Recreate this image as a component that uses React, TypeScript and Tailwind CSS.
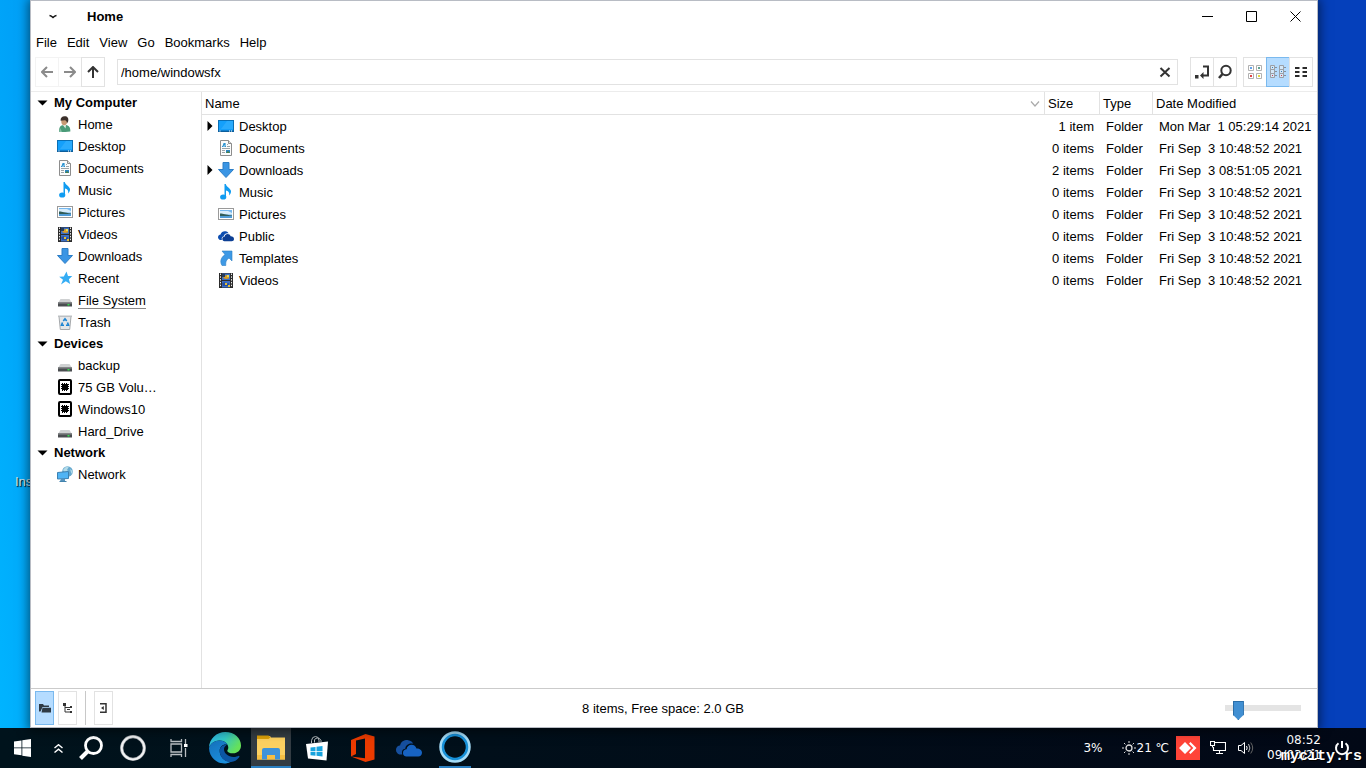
import React, { useState } from 'react';

type IconName =
  | 'home' | 'desktop' | 'documents' | 'music' | 'pictures' | 'videos' | 'downloads'
  | 'recent' | 'drive' | 'trash' | 'volume' | 'network' | 'public' | 'templates';

interface Place {
  label: string;
  icon: IconName;
  current?: boolean;
}

interface Entry {
  name: string;
  icon: IconName;
  size: string;
  modified: string;
  expandable?: boolean;
}

const places: { title: string; items: Place[] }[] = [
  {
    title: 'My Computer',
    items: [
      { label: 'Home', icon: 'home' },
      { label: 'Desktop', icon: 'desktop' },
      { label: 'Documents', icon: 'documents' },
      { label: 'Music', icon: 'music' },
      { label: 'Pictures', icon: 'pictures' },
      { label: 'Videos', icon: 'videos' },
      { label: 'Downloads', icon: 'downloads' },
      { label: 'Recent', icon: 'recent' },
      { label: 'File System', icon: 'drive', current: true },
      { label: 'Trash', icon: 'trash' },
    ],
  },
  {
    title: 'Devices',
    items: [
      { label: 'backup', icon: 'drive' },
      { label: '75 GB Volu…', icon: 'volume' },
      { label: 'Windows10', icon: 'volume' },
      { label: 'Hard_Drive', icon: 'drive' },
    ],
  },
  { title: 'Network', items: [{ label: 'Network', icon: 'network' }] },
];

const entries: Entry[] = [
  { name: 'Desktop', icon: 'desktop', size: '1 item', modified: 'Mon Mar  1 05:29:14 2021', expandable: true },
  { name: 'Documents', icon: 'documents', size: '0 items', modified: 'Fri Sep  3 10:48:52 2021' },
  { name: 'Downloads', icon: 'downloads', size: '2 items', modified: 'Fri Sep  3 08:51:05 2021', expandable: true },
  { name: 'Music', icon: 'music', size: '0 items', modified: 'Fri Sep  3 10:48:52 2021' },
  { name: 'Pictures', icon: 'pictures', size: '0 items', modified: 'Fri Sep  3 10:48:52 2021' },
  { name: 'Public', icon: 'public', size: '0 items', modified: 'Fri Sep  3 10:48:52 2021' },
  { name: 'Templates', icon: 'templates', size: '0 items', modified: 'Fri Sep  3 10:48:52 2021' },
  { name: 'Videos', icon: 'videos', size: '0 items', modified: 'Fri Sep  3 10:48:52 2021' },
];

const menus = ['File', 'Edit', 'View', 'Go', 'Bookmarks', 'Help'];

// 16px file and place icons
const glyphs: Record<IconName, React.ReactNode> = {
  home: (
    <>
      <path d="M2.300 16c-.6-5 1.200-6.500 4.200-7h2.500c3 .6 4.500 2.500 4.300 6.500l-5 .5z" fill="#4a9b78" />
      <path d="M3 16l.4-4 1.400 4z" fill="#8fc6ad" />
      <path d="M5.500 8.500l3 4 .5-4z" fill="#e8efe9" />
      <ellipse cx="7.200" cy="5.600" rx="2.900" ry="3.700" fill="#c79a74" />
      <path d="M3.600 4.800C3.300 1.800 5 .3 7.600.3c3 0 4.300 2 3.600 5L10 7.500c0-2-.8-3-2.300-3.300z" fill="#3b302b" />
    </>
  ),
  desktop: (
    <>
      <rect x=".5" y="2.500" width="15" height="11" fill="#14a0fb" stroke="#0a6fb5" />
      <path d="M9 3h6v8H3z" fill="#3db4ff" opacity=".55" />
      <path d="M0 12.500h16V14H0z" fill="#0c5e9c" />
      <path d="M1.500 12.500h1v1h-1zM11 12.500h1v1h-1zM13 12.500h1v1h-1z" fill="#fff" />
    </>
  ),
  documents: (
    <>
      <path d="M2.500.5h8l3 3v12h-11z" fill="#fbfbfb" stroke="#8d8d8d" />
      <path d="M10.500.5v3h3" fill="#ddd" stroke="#8d8d8d" />
      <path d="M4 6.500h1l1-3h1v3h1" stroke="#2c93d1" strokeWidth="1.200" fill="none" />
      <path d="M9 4.500h1M9 6.500h3M4 8.500h8M4 10.500h3M4 12.500h3" stroke="#9aa3a8" fill="none" />
      <rect x="8" y="10" width="4" height="3" fill="#2c85c1" />
      <path d="M8 13l2-2 2 2z" fill="#4c8146" />
    </>
  ),
  music: (
    <>
      <path d="M6.500 0h1.300c.5 2.800 4.700 4.300 5.200 7 .2 1.700-.8 3.500-1.800 4.500.5-3-.9-4.500-3.200-5V13H6.500z" fill="#109cf1" />
      <ellipse cx="5.200" cy="13" rx="3.100" ry="2.600" fill="#109cf1" />
    </>
  ),
  pictures: (
    <>
      <rect x=".5" y="2.500" width="15" height="11" fill="#fff" stroke="#9a9a9a" />
      <rect x="2" y="4" width="12" height="8" fill="#75b7ee" />
      <path d="M2 5h8l4 2v1.500H2z" fill="#d7ecfa" />
      <path d="M2 7.500c4 0 5 1.200 12 2V10.500H2z" fill="#315c56" />
      <path d="M2 10h12v2H2z" fill="#4f9bd6" />
    </>
  ),
  videos: (
    <>
      <rect x="1" y="1" width="14" height="15" fill="#2b2b2b" />
      <path d="M2.500 1.500v14M13.500 1.500v14" stroke="#ececec" strokeDasharray="1.500 1.300" />
      <rect x="4" y="1.500" width="8" height="6.500" fill="#3c6fc4" />
      <rect x="4" y="9" width="8" height="6.500" fill="#3c6fc4" />
      <path d="M5 6l3-3 3 1v2.500L8 7z" fill="#dc9d24" />
      <path d="M4 2h3v3H4z" fill="#273d5d" />
      <path d="M9 3h2v2H9z" fill="#e9dc52" />
      <path d="M4 11l3-1 1 2 3-1v3H5z" fill="#284d9d" />
      <path d="M7 11h2v2H7zM10 13h2v2h-2z" fill="#e3bf36" />
    </>
  ),
  downloads: (
    <path d="M5 .5h6v7h4.500L8 15.500.5 7.500H5z" fill="#3a95e4" stroke="#2d7ec6" />
  ),
  recent: (
    <path d="M9.500 1.500l1.500 4.600 4.300-.1-3.400 3.300 1.300 4.700-4.400-2.700L4 14.500l2-4.700L2.200 6.800l4.600-.4z" fill="#35adf4" />
  ),
  drive: (
    <>
      <path d="M3.500 7h9l2.500 4H1z" fill="#cfd1d2" />
      <path d="M1 10.500h14v4H1z" fill="#4a4d50" />
      <path d="M1 10.500h14v1.200H1z" fill="#777a7c" />
      <rect x="10.500" y="12" width="2" height="1.500" fill="#35e04f" />
    </>
  ),
  trash: (
    <>
      <path d="M2 2.500h12l-1.300 13H3.300z" fill="#e4e6e8" stroke="#a5a8ab" />
      <path d="M1 1.500h14v1.500H1z" fill="#bdc0c3" />
      <path d="M6.300 7L8 4.800 9.700 7M10.500 8.500l1 2.800H9M7 11.300H4.500l1-2.800" fill="none" stroke="#1c84d2" strokeWidth="1.600" />
    </>
  ),
  volume: (
    <>
      <rect x="2" y="1" width="12" height="14" rx="1" fill="#fff" stroke="#000" strokeWidth="2" />
      <rect x="5" y="5" width="6" height="6" fill="#000" />
      <path d="M5.500 4v8M7.500 4v8M9.500 4v8M4 5.500h8M4 7.500h8M4 9.500h8" stroke="#000" />
    </>
  ),
  network: (
    <>
      <circle cx="10.500" cy="5.500" r="5.300" fill="#66a9ce" />
      <path d="M6 4c2-3 4-4 6-3.500L10 4l2 2-1 3-3-2zM13 3l2.500 2-1 3z" fill="#b3dbe9" />
      <path d="M.5 6.500l11-1v7l-11 .5z" fill="#50b4f4" stroke="#3b81b2" />
      <path d="M4 13h4v2H3z" fill="#5593bd" />
      <path d="M2.500 15.500h7" stroke="#4383ad" />
    </>
  ),
  public: (
    <>
      <path d="M0 9.300C0 7.300 1.500 6.500 2.500 6.500 3 4 5.500 2.900 7.500 3.200c1.700.2 2.700 1.300 3.200 2.200-3-.6-4.700 1-5 3-1.700.1-2.400 1.400-1.800 3.600H2C.7 11.500 0 10.500 0 9.300z" fill="#0d4eb1" />
      <path d="M4.300 11c0-1.400 1-2.200 2.200-2.200C6.800 7 8 6 9.600 6c1.500 0 2.600.9 3 2.300C14.500 8.200 16 9.300 16 10.900c0 1.300-1 2.300-2.300 2.300H6.400c-1.200 0-2.100-1-2.100-2.200z" fill="#0d3f94" />
    </>
  ),
  templates: (
    <path d="M4 1h10v10l-3-3C8 10 7.500 12 7.800 15.500H4C1.500 11.500 3 7.500 7 4.500z" fill="#3e99e5" stroke="#2d7fc5" strokeWidth=".6" />
  ),
};

const Icon: React.FC<{ name: IconName }> = ({ name }) => (
  <svg className="h-4 w-4 shrink-0" viewBox="0 0 16 16" aria-hidden="true">{glyphs[name]}</svg>
);

const TitleBar = () => (
  <div className="flex h-[31px] items-center">
    <button className="flex h-full w-11 items-center justify-center" aria-label="Window menu">
      <svg className="h-2 w-2" viewBox="0 0 8 8"><path d="M.5 2.500q1.800.2 3.500 2 1.700-1.800 3.500-2" fill="none" stroke="#111" strokeWidth="1.500" /></svg>
    </button>
    <h1 className="flex-1 pl-3 font-bold">Home</h1>
    <button className="flex h-full w-11 items-center justify-center" aria-label="Minimize">
      <svg className="h-[11px] w-[11px]" viewBox="0 0 11 11"><path d="M0 5.500h11" stroke="#000" /></svg>
    </button>
    <button className="flex h-full w-11 items-center justify-center" aria-label="Maximize">
      <svg className="h-[11px] w-[11px]" viewBox="0 0 11 11"><path d="M.5.5h10v10H.5z" fill="none" stroke="#000" /></svg>
    </button>
    <button className="flex h-full w-11 items-center justify-center" aria-label="Close">
      <svg className="h-[11px] w-[11px]" viewBox="0 0 11 11"><path d="M.5.5l10 10M10.500.5l-10 10" stroke="#000" /></svg>
    </button>
  </div>
);

const Toolbar: React.FC<{ path: string; onPathChange: (value: string) => void }> = ({ path, onPathChange }) => (
  <div className="flex h-[39px] items-center border-b border-[#ececec] px-1">
    <div className="flex h-[30px]">
      <button className="flex w-6 items-center justify-center border border-[#f3f3f3]" aria-label="Back">
        <svg className="h-3 w-3" viewBox="0 0 12 12"><path d="M12 6H1M6 1L1 6l5 5" fill="none" stroke="#8b8b8b" strokeWidth="2" /></svg>
      </button>
      <button className="-ml-px flex w-6 items-center justify-center border border-[#f3f3f3]" aria-label="Forward">
        <svg className="h-3 w-3" viewBox="0 0 12 12"><path d="M0 6h11M6 1l5 5-5 5" fill="none" stroke="#8b8b8b" strokeWidth="2" /></svg>
      </button>
      <button className="-ml-px flex w-6 items-center justify-center border border-[#e2e2e2]" aria-label="Up">
        <svg className="h-3 w-3" viewBox="0 0 12 12"><path d="M6 12V1M1 6l5-5 5 5" fill="none" stroke="#333" strokeWidth="2" /></svg>
      </button>
    </div>

    <div className="mx-3 flex h-[26px] flex-1 items-center border border-[#e2e2e2] pl-[3px] pr-1">
      <input
        type="text"
        aria-label="Location"
        value={path}
        onChange={(e) => onPathChange(e.target.value)}
        className="h-full min-w-0 flex-1 pt-px outline-none"
      />
      <button className="flex h-full w-4 items-center justify-center" aria-label="Clear location" onClick={() => onPathChange('')}>
        <svg className="h-3 w-3" viewBox="0 0 12 12"><path d="M1.500 2l9 8.500M10.500 2l-9 8.500" stroke="#333" strokeWidth="2" /></svg>
      </button>
    </div>

    <div className="flex h-[30px]">
      <button className="flex w-6 items-center justify-center border border-[#e2e2e2]" aria-label="Jump to location">
        <svg className="h-4 w-4" viewBox="0 0 16 16">
          <path d="M9 2.500h5v9H9" fill="none" stroke="#333" strokeWidth="2" />
          <path d="M9.500 8v7L6 11.500zM1 11h3.500v3.500H1z" fill="#333" />
        </svg>
      </button>
      <button className="-ml-px flex w-6 items-center justify-center border border-[#e2e2e2]" aria-label="Search">
        <svg className="h-4 w-4" viewBox="0 0 16 16">
          <circle cx="9" cy="6.500" r="4.700" fill="none" stroke="#333" strokeWidth="2" />
          <path d="M5.500 10L2 14" stroke="#333" strokeWidth="2.600" />
        </svg>
      </button>
    </div>

    <div className="ml-1.5 flex h-[30px]">
      <button className="flex w-6 items-center justify-center border border-[#e2e2e2]" aria-label="Icon view">
        <svg className="h-[14px] w-[14px]" viewBox="0 0 14 14">
          <path d="M.5.5h5v5h-5zM8.500.5h5v5h-5zM.5 8.500h5v5h-5zM8.500 8.500h5v5h-5z" fill="none" stroke="#b1b1b1" />
          <path d="M2 2h2v2H2z" fill="#63a1ea" /><path d="M10 2h2v2h-2z" fill="#60a28e" />
          <path d="M2 10h2v2H2z" fill="#e14343" /><path d="M10 10h2v2h-2z" fill="#e2d83c" />
        </svg>
      </button>
      <button className="-ml-px flex w-6 items-center justify-center border border-[#7ab9ee] bg-[#b5dcff]" aria-label="List view" aria-pressed="true">
        <svg className="h-4 w-4" viewBox="0 0 16 16">
          <path d="M.5 1.500h4v4h-4zM.5 5.500h4v4h-4zM.5 9.500h4v4h-4zM9.500 1.500h4v4h-4zM9.500 5.500h4v4h-4zM9.500 9.500h4v4h-4z" fill="#d3e7f7" stroke="#9b9fa6" />
          <path d="M5 3.500h2M5 7.500h2M5 11.500h2M14 3.500h2M14 7.500h2M14 11.500h2" stroke="#85919c" />
          <path d="M2 3h1v1H2zM11 7h1v1h-1z" fill="#3c7db5" /><path d="M2 11h1v1H2zM11 11h1v1h-1z" fill="#ce3e53" />
        </svg>
      </button>
      <button className="-ml-px flex w-6 items-center justify-center border border-[#e2e2e2]" aria-label="Compact view">
        <svg className="h-[10px] w-3" viewBox="0 0 12 10"><path d="M0 1h4.500M7.500 1H12M0 5h4.500M7.500 5H12M0 9h4.500M7.500 9H12" stroke="#2b2b2b" strokeWidth="2" /></svg>
      </button>
    </div>
  </div>
);

const Sidebar = () => (
  <nav className="w-[171px] shrink-0 border-r border-[#e2e2e2]">
    {places.map((group) => (
      <section key={group.title}>
        <h2 className="flex h-[21px] items-center gap-1.5 pl-1.5 font-bold">
          <svg className="h-[6px] w-[11px]" viewBox="0 0 11 6"><path d="M.5.5h10l-5 5z" /></svg>
          {group.title}
        </h2>
        <ul>
          {group.items.map((item) => (
            <li key={item.label}>
              <a href="#" className="flex h-[22px] items-center gap-[5px] pl-[26px]">
                <Icon name={item.icon} />
                <span className={item.current ? 'shadow-[0_1px_#888]' : undefined}>{item.label}</span>
              </a>
            </li>
          ))}
        </ul>
      </section>
    ))}
  </nav>
);

const FileTable = () => (
  <table className="w-full table-fixed border-collapse">
    <colgroup>
      <col />
      <col className="w-[55px]" />
      <col className="w-[53px]" />
      <col className="w-[165px]" />
    </colgroup>
    <thead>
      <tr className="h-[23px] text-left shadow-[inset_0_-1px_#e2e2e2]">
        <th className="p-0 pl-[3px] font-normal">
          <div className="flex items-center justify-between pr-1">
            Name
            <svg className="h-[6px] w-[10px]" viewBox="0 0 10 6"><path d="M1 .5l4 4.500L9 .5" fill="none" stroke="#aaa" strokeWidth="1.200" /></svg>
          </div>
        </th>
        <th className="p-0 pl-1 font-normal shadow-[inset_1px_0_#e2e2e2]">Size</th>
        <th className="p-0 pl-1 font-normal shadow-[inset_1px_0_#e2e2e2]">Type</th>
        <th className="p-0 pl-1 font-normal shadow-[inset_1px_0_#e2e2e2]">Date Modified</th>
      </tr>
    </thead>
    <tbody>
      {entries.map((entry) => (
        <tr key={entry.name} className="h-[22px]">
          <td className="p-0">
            <div className="flex items-center gap-[5px] pl-[5px]">
              <svg className="h-[10px] w-[6px]" viewBox="0 0 6 10">{entry.expandable && <path d="M.5 0v10L5.500 5z" />}</svg>
              <Icon name={entry.icon} />
              {entry.name}
            </div>
          </td>
          <td className="p-0 pr-[5px] text-right">{entry.size}</td>
          <td className="p-0 pl-[7px]">Folder</td>
          <td className="p-0 pl-[7px] whitespace-pre">{entry.modified}</td>
        </tr>
      ))}
    </tbody>
  </table>
);

const StatusBar = () => {
  const [zoom, setZoom] = useState(12);
  return (
    <div className="flex h-[39px] items-center border-t border-[#cbcbcb] px-1">
      <button className="flex h-[34px] w-[19px] items-center justify-center border border-[#7ab9ee] bg-[#b5dcff]" aria-label="Places">
        <svg className="h-[10px] w-3 shrink-0" viewBox="0 0 12 10">
          <path d="M0 1h4l1 1.500h5V4H3.500L1.500 8.500H0z" fill="#2e3a45" />
          <path d="M3.500 4.800H12V9.500H2.500z" fill="#2e3a45" />
        </svg>
      </button>
      <button className="ml-1 flex h-[34px] w-[19px] items-center justify-center border border-[#e2e2e2]" aria-label="Tree">
        <svg className="h-[10px] w-[10px] shrink-0" viewBox="0 0 10 10">
          <path d="M0 0h3v3H0zM7 3h2v2H7zM7 8h2v2H7z" fill="#333" />
          <path d="M2 2v7h6M2 4.500h6M4 6.500h3" fill="none" stroke="#333" />
        </svg>
      </button>
      <div className="mx-2 h-[34px] w-px bg-[#c8c8c8]" />
      <button className="flex h-[34px] w-[19px] items-center justify-center border border-[#e2e2e2]" aria-label="Hide sidebar">
        <svg className="h-[10px] w-[7px] shrink-0" viewBox="0 0 7 10"><path d="M0 .8h6v8.400H0" fill="none" stroke="#333" strokeWidth="1.500" /><path d="M3.800 3v4L1 5z" fill="#333" /></svg>
      </button>
      <p className="flex-1 text-center">8 items, Free space: 2.0 GB</p>
      <input
        type="range"
        aria-label="Zoom"
        min={0}
        max={100}
        value={zoom}
        onChange={(e) => setZoom(Number(e.target.value))}
        className="mx-3 h-5 w-[76px] appearance-none bg-transparent [&::-webkit-slider-runnable-track]:h-1.5 [&::-webkit-slider-runnable-track]:bg-[#e4e4e4] [&::-webkit-slider-thumb]:-mt-1 [&::-webkit-slider-thumb]:h-[19px] [&::-webkit-slider-thumb]:w-[11px] [&::-webkit-slider-thumb]:appearance-none [&::-webkit-slider-thumb]:border [&::-webkit-slider-thumb]:border-[#2b6ea8] [&::-webkit-slider-thumb]:bg-[#418fd2] [&::-webkit-slider-thumb]:[clip-path:polygon(0_0,100%_0,100%_72%,50%_100%,0_72%)]"
      />
    </div>
  );
};

const Taskbar = () => (
  <footer className="flex h-10 shrink-0 items-center bg-linear-to-r from-[#00131c] to-[#020816] font-['DejaVu_Sans',sans-serif] text-xs text-white">
    <button className="flex h-full w-11 items-center justify-center" aria-label="Start">
      <svg className="h-[18px] w-[17px]" viewBox="0 0 17 18"><path d="M0 2.500L7.500 1.500V8.500H0zM8.300 1.300L17 0v8.500H8.300zM0 9.300h7.500v7L0 15.300zM8.300 9.300H17V18l-8.700-1.300z" fill="#fff" /></svg>
    </button>
    <button className="flex h-full w-7 items-center justify-center" aria-label="Show more">
      <svg className="h-[9px] w-[9px]" viewBox="0 0 9 9"><path d="M.5 4l4-3.300 4 3.300M.5 8.500l4-3.300 4 3.300" fill="none" stroke="#fff" strokeWidth="1.400" /></svg>
    </button>
    <button className="flex h-full w-[38px] items-center justify-center" aria-label="Search">
      <svg className="h-6 w-6" viewBox="0 0 24 24">
        <circle cx="14.500" cy="9.500" r="8" fill="none" stroke="#fff" strokeWidth="2.800" />
        <path d="M8.500 15.500L1.500 22.500" stroke="#fff" strokeWidth="4" />
      </svg>
    </button>
    <button className="flex h-full w-[46px] items-center justify-center" aria-label="Assistant">
      <svg className="h-[26px] w-[26px]" viewBox="0 0 26 26">
        <circle cx="13" cy="13" r="11.300" fill="none" stroke="#a9adb1" strokeWidth="3.200" />
        <circle cx="13" cy="13" r="11.300" fill="none" stroke="#f2f3f4" strokeWidth="1.800" />
      </svg>
    </button>
    <button className="flex h-full w-[46px] items-center justify-center" aria-label="Task view">
      <svg className="h-[18px] w-[18px]" viewBox="0 0 18 18" fill="none" stroke="#b9bec2">
        <path d="M1 0v2.500h10.500V0M1 18v-2.500h10.500V18M1 5h10.500v8H1z" strokeWidth="1.300" />
        <path d="M15.500 0v5M15.500 9v9" strokeWidth="1.300" />
        <path d="M14 5h3.500v3H14z" fill="#fff" stroke="none" />
      </svg>
    </button>
    <button className="flex h-full w-[46px] items-center justify-center" aria-label="Edge">
      <svg className="h-8 w-8" viewBox="0 0 32 32">
        <defs>
          <linearGradient id="edgeTop" x1="0" y1="0" x2="1" y2=".5">
            <stop offset="0" stopColor="#2cb2ea" /><stop offset=".5" stopColor="#32c7c7" /><stop offset="1" stopColor="#66e15a" />
          </linearGradient>
          <linearGradient id="edgeLeft" x1="0" y1="0" x2=".6" y2="1">
            <stop offset="0" stopColor="#1570bb" /><stop offset="1" stopColor="#1b8fdc" />
          </linearGradient>
        </defs>
        <path d="M0 15.500C.5 6.500 7.500 0 16.300 0 25.500 0 32 6.300 32 13.500c0 4.700-3.500 7.800-8 7.800-3.500 0-5.700-1.100-5.700-2.600 0-.8 1-1.300 1-3.200 0-3.600-3.600-7-8.800-7C5.500 8.500 1.800 11.500 0 15.500z" fill="url(#edgeTop)" />
        <path d="M0 16c1.500-4.700 5.500-7.500 10.500-7.500 4 0 7 2 8.200 4.500-4-1.500-8 1.500-8 6 0 5.500 4.800 11.500 12 10.500C13 35 .5 28.500 0 16z" fill="url(#edgeLeft)" />
        <path d="M10.700 17.500c.8-3 3.500-5 6.800-4.500-1.700 1.200-2.500 2.500-2.500 4.300 0 4 4.200 7.700 9.500 7.700 2.300 0 4-.7 5.200-1.300 1 0 1 .8.3 1.700-2 2.700-4.700 4.200-8 4.500-6.500.5-12-5.500-11.300-12.400z" fill="#0b56a4" />
      </svg>
    </button>
    <button className="flex h-full w-[46px] items-center justify-center" aria-label="Files" aria-current="true">
      <span className="flex h-full w-10 items-center justify-center border-b-2 border-[#2a7fc1] bg-[#333c43]">
        <svg className="h-7 w-7" viewBox="0 0 28 28">
          <path d="M0 3h28v23.500H0z" fill="#fcd061" />
          <path d="M13 3h15v1.500H14z" fill="#333c43" />
          <path d="M0 2.500h11.500l2 2-2 1.500H0z" fill="#dda008" />
          <path d="M0 22h28v4.500H0z" fill="#f6bf43" />
          <path d="M5 26.500V17q0-2 2-2h14q2 0 2 2v9.500h-5V22h-8v4.500z" fill="#3d92d9" />
        </svg>
      </span>
    </button>
    <button className="flex h-full w-[46px] items-center justify-center" aria-label="Store">
      <svg className="h-[26px] w-[22px]" viewBox="0 0 22 26">
        <path d="M5.500 8V5.500Q6 1.500 9.500 1.500T13 5.500V7M8.500 7.500V5Q9 3 11.500 3T15 5.500V7" fill="none" stroke="#b5babd" />
        <path d="M0 9l22-2.500L20.500 25.500 2 23.500z" fill="#fff" />
        <path d="M4.500 12.500l5-.6v4h-5zM10.500 11.800l6-.7v4.800h-6zM4.500 16.700h5v4l-5-.5zM10.500 16.700h6v4.800l-6-.7z" fill="#18a3dd" />
      </svg>
    </button>
    <button className="flex h-full w-[46px] items-center justify-center" aria-label="Office">
      <svg className="h-7 w-6" viewBox="0 0 24 28"><path d="M0 6L14.500 0 23.500 2.500v23L14.500 28 0 22.500l14 1.800V4.500L5 6.500v13.500L0 22.500z" fill="#eb3b00" /></svg>
    </button>
    <button className="flex h-full w-[46px] items-center justify-center" aria-label="OneDrive">
      <svg className="h-[26px] w-[26px]" viewBox="0 2 16 12">
        <path d="M0 9.300C0 7.300 1.500 6.500 2.500 6.500 3 4 5.500 2.900 7.500 3.200c1.700.2 2.700 1.300 3.200 2.200-3-.6-4.700 1-5 3-1.700.1-2.400 1.400-1.800 3.600H2C.7 11.500 0 10.500 0 9.300z" fill="#164f9e" />
        <path d="M4.300 11c0-1.400 1-2.200 2.200-2.200C6.800 7 8 6 9.600 6c1.500 0 2.600.9 3 2.300C14.500 8.200 16 9.300 16 10.900c0 1.300-1 2.300-2.300 2.300H6.400c-1.200 0-2.100-1-2.100-2.200z" fill="#1763c2" />
      </svg>
    </button>
    <button className="flex h-full w-[46px] items-center justify-center" aria-label="Cortana">
      <span className="flex h-full w-8 items-center justify-center border-b-2 border-[#2a7fc1]">
        <svg className="h-8 w-8" viewBox="0 0 32 32">
          <circle cx="16" cy="16" r="13.500" fill="none" stroke="#a5dcf7" strokeWidth="4.500" />
          <circle cx="16" cy="16" r="12" fill="none" stroke="#1790d8" strokeWidth="2.500" />
        </svg>
      </span>
    </button>

    <div className="ml-auto flex h-full items-center pr-4">
      <span>3%</span>
      <svg className="ml-[19px] h-[14px] w-[14px]" viewBox="0 0 14 14" fill="none" stroke="#ddd">
        <circle cx="7" cy="7" r="3" strokeWidth="1.300" />
        <path d="M7 0v2M7 12v2M0 7h2M12 7h2M2 2l1.400 1.400M10.600 10.600L12 12M2 12l1.400-1.400M10.600 3.400L12 2" />
      </svg>
      <span className="ml-px">21 ℃</span>
      <button className="ml-[7px] flex h-6 w-6 items-center justify-center bg-[#ff4438]" aria-label="Remote desktop">
        <svg className="h-3 w-[18px]" viewBox="0 0 18 12"><path d="M6 0l6 6-6 6-6-6zM10 1.500L11.500 0l6 6-6 6L10 10.500 14.300 6z" fill="#fff" /></svg>
      </button>
      <svg className="ml-2.5 h-4 w-4" viewBox="0 0 16 16" fill="none" stroke="#fff">
        <path d="M4.500 2.500h11v8h-12V7M9.500 10.500v3M6 13.500h7M.5 1.500h4v4h-4zM2.500 5.500v2" strokeWidth="1.100" />
      </svg>
      <svg className="ml-3 h-4 w-4" viewBox="0 0 16 16" fill="none" stroke="#fff">
        <path d="M.5 5.500h2.500l3.500-3v11l-3.500-3H.5zM8.500 6q1.300 2 0 4" />
        <path d="M10.500 4q2.800 4 0 8" stroke="#bbb" /><path d="M12.700 2.500q4 5.500 0 11" stroke="#666" />
      </svg>
      <div className="mx-[13px] text-right leading-[15px]">
        <div>08:52</div>
        <div>09/03/21</div>
      </div>
      <button className="flex h-4 w-4 items-center justify-center" aria-label="Power">
        <svg className="h-4 w-4" viewBox="0 0 16 16"><path d="M8 1v7M4.500 3.300a6 6 0 1 0 7 0" fill="none" stroke="#fff" strokeWidth="2" /></svg>
      </button>
    </div>
  </footer>
);

const App: React.FC = () => {
  const [path, setPath] = useState('/home/windowsfx');

  return (
    <div className="relative flex h-screen flex-col overflow-hidden bg-[linear-gradient(84deg,#00b5ff_0%,#00a2f8_6%,#0540bb_90%)] font-['Liberation_Sans',Arial,sans-serif] text-[13px] leading-[15px] text-black">
      {/* desktop icon label, partly hidden by the window */}
      <span className="absolute top-[474px] left-[15px] text-[#d8e6ea] [text-shadow:1px_1px_1px_#000]">Install</span>

      <main className="relative mr-12 ml-[30px] flex min-h-0 flex-1 flex-col border border-[#b8bcc4] bg-white shadow-[0_1px_10px_2px_rgba(0,0,0,0.5)]">
        <TitleBar />
        <div className="flex h-[21px] items-center gap-2.5 px-[5px]">
          {menus.map((menu) => (
            <button key={menu}>{menu}</button>
          ))}
        </div>
        <Toolbar path={path} onPathChange={setPath} />
        <div className="flex min-h-0 flex-1">
          <Sidebar />
          <div className="min-w-0 flex-1">
            <FileTable />
          </div>
        </div>
        <StatusBar />
      </main>

      <Taskbar />

      <span className="pointer-events-none absolute right-1 bottom-0 font-['Liberation_Mono',monospace] text-[15px] leading-[22px] font-bold text-white [text-shadow:1px_1px_#000]">
        mycity.rs
      </span>
    </div>
  );
};

export default App;
